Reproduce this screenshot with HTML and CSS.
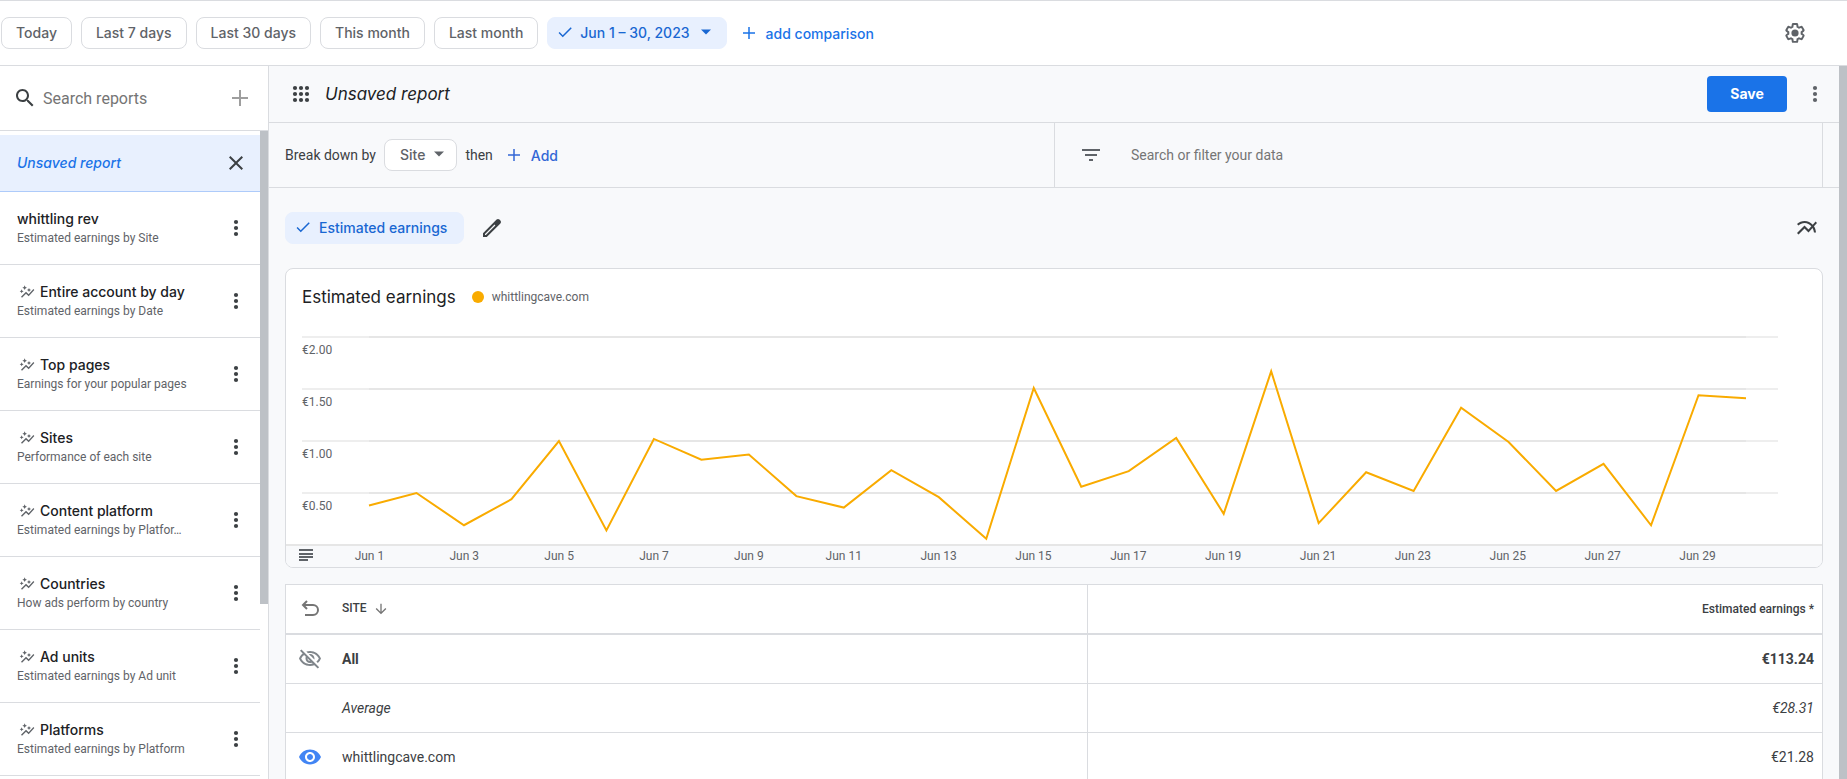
FILE: index.html
```html
<!DOCTYPE html>
<html lang="en">
<head>
    <meta charset="UTF-8">
    <meta name="viewport" content="width=device-width, initial-scale=1">
    <title>Reports</title>
    <link rel="stylesheet" href="styles.css">
</head>
<body>
    <!-- Shared icons -->
    <svg class="sprite" aria-hidden="true">
        <symbol id="i-more" viewBox="0 0 24 24"><circle cx="12" cy="6" r="2.1"/><circle cx="12" cy="12" r="2.1"/><circle cx="12" cy="18" r="2.1"/></symbol>
        <symbol id="i-plus" viewBox="0 0 24 24"><path d="M11 4h2v7h7v2h-7v7h-2v-7H4v-2h7z"/></symbol>
        <symbol id="i-check" viewBox="0 0 24 24"><path d="M9 16.17L4.83 12l-1.42 1.41L9 19 21 7l-1.41-1.41z"/></symbol>
        <symbol id="i-down" viewBox="0 0 24 24"><path d="M6 9l6 6 6-6z"/></symbol>
        <symbol id="i-insights" viewBox="0 0 24 24"><path d="M14.06 9.94L12 9l2.06-.94L15 6l.94 2.06L18 9l-2.06.94L15 12l-.94-2.06zM4 14l.94-2.06L7 11l-2.06-.94L4 8l-.94 2.06L1 11l2.06.94L4 14zm4.5-5l1.09-2.41L12 5.5 9.59 4.41 8.5 2 7.41 4.41 5 5.5l2.41 1.09L8.5 9zm-4 11.5l6-6.01 4 4L23 8.93l-1.41-1.41-7.09 7.97-4-4L3 19l1.5 1.5z"/></symbol>
    </svg>

    <header class="topbar">
        <button class="chip">Today</button>
        <button class="chip">Last 7 days</button>
        <button class="chip">Last 30 days</button>
        <button class="chip">This month</button>
        <button class="chip">Last month</button>
        <button class="chip chip-active date-chip">
            <svg class="icon-18"><use href="#i-check"/></svg>
            Jun 1 – 30, 2023
            <svg class="icon-20"><use href="#i-down"/></svg>
        </button>
        <button class="link-btn compare"><svg class="icon-18"><use href="#i-plus"/></svg>add comparison</button>
        <button class="icon-btn settings" aria-label="Settings">
            <svg class="icon-24" viewBox="0 0 24 24"><path fill="none" stroke="currentColor" stroke-width="2.2" transform="translate(1.3 1.3) scale(.89)" d="M19.43 12.98c.04-.32.07-.64.07-.98 0-.34-.03-.66-.07-.98l2.11-1.65c.19-.15.24-.42.12-.64l-2-3.46c-.09-.16-.26-.25-.44-.25-.06 0-.12.01-.17.03l-2.49 1c-.52-.4-1.08-.73-1.69-.98l-.38-2.65C14.46 2.18 14.25 2 14 2h-4c-.25 0-.46.18-.49.42l-.38 2.65c-.61.25-1.17.59-1.69.98l-2.49-1c-.06-.02-.12-.03-.18-.03-.17 0-.34.09-.43.25l-2 3.46c-.13.22-.07.49.12.64l2.11 1.65c-.04.32-.07.65-.07.98 0 .33.03.66.07.98l-2.11 1.65c-.19.15-.24.42-.12.64l2 3.46c.09.16.26.25.44.25.06 0 .12-.01.17-.03l2.49-1c.52.4 1.08.73 1.69.98l.38 2.65c.03.24.24.42.49.42h4c.25 0 .46-.18.49-.42l.38-2.65c.61-.25 1.17-.59 1.69-.98l2.49 1c.06.02.12.03.18.03.17 0 .34-.09.43-.25l2-3.46c.12-.22.07-.49-.12-.64z"/><circle cx="12" cy="12" r="3.6"/></svg>
        </button>
    </header>

    <div class="layout">
        <aside class="sidebar">
            <div class="search">
                <label for="search-reports" aria-label="Search reports"><svg class="icon-24" viewBox="0 0 24 24"><path d="M15.5 14h-.79l-.28-.27C15.41 12.59 16 11.11 16 9.5 16 5.91 13.09 3 9.5 3S3 5.91 3 9.5 5.91 16 9.5 16c1.61 0 3.09-.59 4.23-1.57l.27.28v.79l5 4.99L20.49 19l-4.99-5zm-6 0C7.01 14 5 11.99 5 9.5S7.01 5 9.5 5 14 7.01 14 9.5 11.99 14 9.5 14z"/></svg></label>
                <input type="text" id="search-reports" placeholder="Search reports">
                <button class="icon-btn new-report" aria-label="New report"><svg class="icon-24"><use href="#i-plus"/></svg></button>
            </div>
            <div class="list-wrap">
                <ul class="reports">
                    <li class="report selected">
                        <a href="#">Unsaved report</a>
                        <button class="icon-btn" aria-label="Close"><svg class="icon-24" viewBox="0 0 24 24"><path d="M19 6.41L17.59 5 12 10.59 6.41 5 5 6.41 10.59 12 5 17.59 6.41 19 12 13.41 17.59 19 19 17.59 13.41 12z"/></svg></button>
                    </li>
                    <li class="report">
                        <a href="#"><span class="name">whittling rev</span><span class="desc">Estimated earnings by Site</span></a>
                        <button class="icon-btn" aria-label="More"><svg class="icon-24"><use href="#i-more"/></svg></button>
                    </li>
                    <li class="report">
                        <a href="#"><span class="name"><svg class="icon-16"><use href="#i-insights"/></svg>Entire account by day</span><span class="desc">Estimated earnings by Date</span></a>
                        <button class="icon-btn" aria-label="More"><svg class="icon-24"><use href="#i-more"/></svg></button>
                    </li>
                    <li class="report">
                        <a href="#"><span class="name"><svg class="icon-16"><use href="#i-insights"/></svg>Top pages</span><span class="desc">Earnings for your popular pages</span></a>
                        <button class="icon-btn" aria-label="More"><svg class="icon-24"><use href="#i-more"/></svg></button>
                    </li>
                    <li class="report">
                        <a href="#"><span class="name"><svg class="icon-16"><use href="#i-insights"/></svg>Sites</span><span class="desc">Performance of each site</span></a>
                        <button class="icon-btn" aria-label="More"><svg class="icon-24"><use href="#i-more"/></svg></button>
                    </li>
                    <li class="report">
                        <a href="#"><span class="name"><svg class="icon-16"><use href="#i-insights"/></svg>Content platform</span><span class="desc">Estimated earnings by Platfor…</span></a>
                        <button class="icon-btn" aria-label="More"><svg class="icon-24"><use href="#i-more"/></svg></button>
                    </li>
                    <li class="report">
                        <a href="#"><span class="name"><svg class="icon-16"><use href="#i-insights"/></svg>Countries</span><span class="desc">How ads perform by country</span></a>
                        <button class="icon-btn" aria-label="More"><svg class="icon-24"><use href="#i-more"/></svg></button>
                    </li>
                    <li class="report">
                        <a href="#"><span class="name"><svg class="icon-16"><use href="#i-insights"/></svg>Ad units</span><span class="desc">Estimated earnings by Ad unit</span></a>
                        <button class="icon-btn" aria-label="More"><svg class="icon-24"><use href="#i-more"/></svg></button>
                    </li>
                    <li class="report">
                        <a href="#"><span class="name"><svg class="icon-16"><use href="#i-insights"/></svg>Platforms</span><span class="desc">Estimated earnings by Platform</span></a>
                        <button class="icon-btn" aria-label="More"><svg class="icon-24"><use href="#i-more"/></svg></button>
                    </li>
                </ul>
                <div class="scrollbar"><div class="thumb list-thumb"></div></div>
            </div>
        </aside>

        <main class="content">
            <div class="title-row">
                <svg class="icon-24" viewBox="0 0 24 24"><circle cx="6" cy="6" r="2.1"/><circle cx="12" cy="6" r="2.1"/><circle cx="18" cy="6" r="2.1"/><circle cx="6" cy="12" r="2.1"/><circle cx="12" cy="12" r="2.1"/><circle cx="18" cy="12" r="2.1"/><circle cx="6" cy="18" r="2.1"/><circle cx="12" cy="18" r="2.1"/><circle cx="18" cy="18" r="2.1"/></svg>
                <h1>Unsaved report</h1>
                <button class="save">Save</button>
                <button class="icon-btn" aria-label="More"><svg class="icon-24"><use href="#i-more"/></svg></button>
            </div>

            <div class="filter-row">
                <div class="breakdown">
                    <span>Break down by</span>
                    <button class="chip site-chip">Site <svg class="icon-20"><use href="#i-down"/></svg></button>
                    <span>then</span>
                    <button class="link-btn add"><svg class="icon-18"><use href="#i-plus"/></svg>Add</button>
                </div>
                <div class="filter">
                    <label for="filter-data" aria-label="Filter"><svg class="icon-24" viewBox="0 0 24 24"><path d="M10 18h4v-2h-4v2zM3 6v2h18V6H3zm3 7h12v-2H6v2z"/></svg></label>
                    <input type="text" id="filter-data" placeholder="Search or filter your data">
                </div>
            </div>

            <div class="metrics">
                <button class="chip chip-active"><svg class="icon-18"><use href="#i-check"/></svg>Estimated earnings</button>
                <button class="icon-btn" aria-label="Edit metrics"><svg class="icon-24" viewBox="0 0 24 24"><path fill-rule="evenodd" d="M3 17.2V21h3.8L20.4 7.4a2 2 0 0 0 0-2.8l-1-1a2 2 0 0 0-2.800 0zM5 18.100L14.500 8.600l.9.900L5.900 19H5z"/></svg></button>
                <button class="icon-btn chart-toggle" aria-label="Chart type"><svg class="icon-24" viewBox="0 0 24 24"><path d="M22 6.92l-1.41-1.41-2.85 3.21C15.68 6.4 12.83 5 9.61 5 6.72 5 4.07 6.16 2 8l1.42 1.42C5.12 7.93 7.27 7 9.61 7c2.74 0 5.09 1.26 6.77 3.24l-2.88 3.24-4-4L2 16.99l1.5 1.5 6-6.01 4 4 4.05-4.55c.75 1.35 1.25 2.9 1.44 4.55H21c-.22-2.3-.95-4.39-2.04-6.14L22 6.92z"/></svg></button>
            </div>

            <section class="card">
                <div class="card-head">
                    <h2>Estimated earnings</h2>
                    <span class="dot"></span>
                    <span class="legend">whittlingcave.com</span>
                </div>
                <div class="chart">
                    <div class="gridlines">
                        <div>€2.00</div>
                        <div>€1.50</div>
                        <div>€1.00</div>
                        <div>€0.50</div>
                    </div>
                    <!-- one unit per day across, 100 units per euro down -->
                    <svg class="line" viewBox="0 0 29 200" preserveAspectRatio="none">
                        <polyline points="0,162 1,150 2,181 3,156 4,100 5,186 6,98 7,118 8,113 9,153 10,164 11,128 12,154 13,194 14,49 15,144 16,129 17,97 18,170 19,33 20,179 21,130 22,148 23,68 24,101 25,148 26,122 27,181 28,56 29,59"/>
                    </svg>
                </div>
                <div class="axis">
                    <svg class="icon-24" viewBox="0 0 24 24"><path d="M5 5h14v2H5zM5 9h14v2H5zM5 12h14v2H5zM5 15h9v2H5z"/></svg>
                    <ol class="days">
                        <li>Jun 1</li><li>Jun 3</li><li>Jun 5</li><li>Jun 7</li><li>Jun 9</li>
                        <li>Jun 11</li><li>Jun 13</li><li>Jun 15</li><li>Jun 17</li><li>Jun 19</li>
                        <li>Jun 21</li><li>Jun 23</li><li>Jun 25</li><li>Jun 27</li><li>Jun 29</li>
                    </ol>
                </div>
            </section>

            <table>
                <colgroup><col class="col-icon"><col class="col-site"><col></colgroup>
                <thead>
                    <tr>
                        <th><svg class="icon-24 undo" viewBox="0 0 24 24"><path fill="none" stroke="currentColor" stroke-width="2" d="M9 4L5 8l4 4M5 8h10a5 5 0 0 1 0 10H7"/></svg></th>
                        <th class="site-head">SITE <svg class="icon-16" viewBox="0 0 24 24"><path d="M20 12l-1.410-1.410L13 16.170V4h-2v12.170l-5.580-5.590L4 12l8 8z"/></svg></th>
                        <th class="num">Estimated earnings *</th>
                    </tr>
                </thead>
                <tbody>
                    <tr class="total">
                        <td><svg class="icon-24 eye-off" viewBox="0 0 24 24"><path d="M12 6c3.79 0 7.17 2.13 8.82 5.5-.59 1.22-1.42 2.27-2.41 3.12l1.41 1.41c1.39-1.23 2.49-2.77 3.18-4.53C21.27 7.11 17 4 12 4c-1.27 0-2.49.2-3.64.57l1.65 1.65C10.66 6.09 11.32 6 12 6zm-1.07 1.14L13 9.21c.57.25 1.03.71 1.28 1.28l2.07 2.07c.08-.34.14-.7.14-1.07C16.5 9.01 14.48 7 12 7c-.37 0-.72.05-1.07.14zM2.01 3.87l2.68 2.68C3.06 7.83 1.77 9.53 1 11.5 2.73 15.89 7 19 12 19c1.52 0 2.98-.29 4.32-.82l3.42 3.42 1.41-1.41L3.42 2.45 2.01 3.87zm7.5 7.5l2.61 2.61c-.04.01-.08.02-.12.02-1.38 0-2.5-1.12-2.5-2.5 0-.05.01-.08.01-.13zm-3.4-3.4l1.75 1.75c-.23.55-.36 1.15-.36 1.78 0 2.48 2.02 4.5 4.5 4.5.63 0 1.23-.13 1.77-.36l.98.98c-.88.24-1.8.38-2.75.38-3.79 0-7.17-2.13-8.82-5.5.7-1.43 1.72-2.61 2.93-3.53z"/></svg></td>
                        <td>All</td>
                        <td class="num">€113.24</td>
                    </tr>
                    <tr class="average">
                        <td></td>
                        <td>Average</td>
                        <td class="num">€28.31</td>
                    </tr>
                    <tr>
                        <td><svg class="icon-24 eye" viewBox="0 0 24 24"><path d="M12 4.500C7 4.500 2.730 7.610 1 12c1.730 4.390 6 7.500 11 7.500s9.270-3.110 11-7.500c-1.730-4.390-6-7.500-11-7.500zM12 17c-2.760 0-5-2.240-5-5s2.240-5 5-5 5 2.240 5 5-2.240 5-5 5zm0-8c-1.660 0-3 1.340-3 3s1.340 3 3 3 3-1.340 3-3-1.340-3-3-3z"/></svg></td>
                        <td>whittlingcave.com</td>
                        <td class="num">€21.28</td>
                    </tr>
                </tbody>
            </table>
        </main>
        <div class="scrollbar"><div class="thumb"></div></div>
    </div>
</body>
</html>
```
FILE: styles.css
```css
* {
    box-sizing: border-box;
}

body {
    margin: 0;
    height: 100vh;
    display: flex;
    flex-direction: column;
    overflow: hidden;
    background-color: #fff;
    color: #3c4043;
    font-family: Roboto, sans-serif;
    font-size: 14px;
}

/* Icons */
svg {
    display: block;
    flex: none;
    fill: currentColor;
}

.sprite {
    position: absolute;
    width: 0;
    height: 0;
}

.icon-16 { width: 16px; height: 16px; }
.icon-18 { width: 18px; height: 18px; }
.icon-20 { width: 20px; height: 20px; }
.icon-24 { width: 24px; height: 24px; }

/* Buttons and inputs */
button {
    padding: 0;
    border: none;
    background: none;
    color: inherit;
    font-family: Inter, sans-serif;
    font-size: 14px;
    font-weight: 500;
    white-space: nowrap;
    cursor: pointer;
}

input {
    min-width: 0;
    flex: 1;
    padding: 0;
    border: none;
    outline: none;
    background: none;
    color: #3c4043;
    font-family: Roboto, sans-serif;
    font-size: 14px;
}

input::placeholder {
    color: #757575;
}

.chip {
    display: flex;
    align-items: center;
    height: 32px;
    padding: 0 14px 2px;
    border: 1px solid #dadce0;
    border-radius: 8px;
    background-color: #fff;
    color: #5f6368;
}

.chip-active {
    gap: 7px;
    padding: 0 16px 2px 8px;
    border-color: #e8f0fe;
    background-color: #e8f0fe;
    color: #1967d2;
}

.date-chip {
    gap: 6px;
    padding-right: 10px;
}

.link-btn {
    display: flex;
    align-items: center;
    gap: 8px;
    color: #1a73e8;
}

/* Top bar */
.topbar {
    display: flex;
    align-items: center;
    gap: 9px;
    height: 66px;
    padding: 0 40px 0 1px;
    border-top: 1px solid #dadce0;
    border-bottom: 1px solid #dadce0;
}

.compare {
    margin-left: 4px;
}

.settings {
    margin-left: auto;
    color: #5f6368;
}

.layout {
    flex: 1;
    min-height: 0;
    display: flex;
}

.scrollbar {
    flex: none;
    width: 8px;
}

.thumb {
    height: 100%;
    background-color: #bdc1c6;
}

.list-thumb {
    height: 73%;
}

/* Sidebar */
.sidebar {
    flex: none;
    display: flex;
    flex-direction: column;
    width: 269px;
    border-right: 1px solid #dadce0;
}

.search {
    display: flex;
    align-items: center;
    gap: 6px;
    height: 65px;
    padding: 0 16px 0 13px;
    border-bottom: 1px solid #dadce0;
}

.search input {
    font-size: 16px;
}

.new-report {
    color: #9e9e9e;
}

.list-wrap {
    flex: 1;
    min-height: 0;
    display: flex;
}

.reports {
    flex: 1;
    min-width: 0;
    margin: 0;
    padding: 4px 0 0;
    overflow: hidden;
    list-style: none;
}

.report {
    display: flex;
    align-items: center;
    height: 73px;
    padding: 0 12px 0 17px;
    border-bottom: 1px solid #dadce0;
}

.report a {
    flex: 1;
    min-width: 0;
    color: inherit;
    text-decoration: none;
}

.report.selected {
    height: 57px;
    border-bottom-color: #aecbfa;
    background-color: #e8f0fe;
}

.report.selected a {
    padding-bottom: 2px;
    color: #1a73e8;
    font-family: Inter, sans-serif;
    font-style: italic;
    font-weight: 500;
}

.name {
    display: flex;
    align-items: center;
    gap: 5px;
    margin-bottom: 2px;
    color: #202124;
    font-family: Inter, sans-serif;
    font-weight: 500;
    line-height: 18px;
}

.name svg {
    margin-left: 2px;
    color: #5f6368;
}

.desc {
    display: block;
    color: #5f6368;
    font-size: 12px;
    line-height: 16px;
    white-space: nowrap;
}

/* Main area */
.content {
    flex: 1;
    min-width: 0;
    overflow: hidden;
    background-color: #f8f9fb;
}

.title-row {
    display: flex;
    align-items: center;
    gap: 12px;
    height: 57px;
    padding: 0 12px 0 20px;
    border-bottom: 1px solid #dadce0;
}

h1,
h2 {
    margin: 0;
    color: #202124;
    font-family: Inter, sans-serif;
    font-size: 17px;
    font-weight: 400;
}

h1 {
    flex: 1;
    font-style: italic;
}

.save {
    width: 80px;
    height: 36px;
    padding-bottom: 2px;
    border-radius: 4px;
    background-color: #1a73e8;
    color: #fff;
    font-weight: 700;
}

.title-row .icon-btn {
    margin-left: 4px;
    color: #5f6368;
}

.filter-row {
    display: grid;
    grid-template-columns: 1fr 1fr;
    height: 65px;
    padding: 0 16px;
    border-bottom: 1px solid #dadce0;
}

.breakdown {
    display: flex;
    align-items: center;
    gap: 8px;
}

.site-chip {
    gap: 4px;
    padding: 0 7px 2px 15px;
}

.add {
    margin-left: 4px;
    color: #3367d6;
}

.filter {
    display: flex;
    align-items: center;
    gap: 28px;
    padding: 0 24px;
    border-left: 1px solid #dadce0;
    border-right: 1px solid #dadce0;
}

.filter svg {
    color: #5f6368;
}

.metrics {
    display: flex;
    align-items: center;
    gap: 16px;
    height: 80px;
    padding: 0 20px 0 16px;
}

.chart-toggle {
    margin-left: auto;
}

/* Chart card */
.card {
    margin: 0 16px 16px;
    overflow: hidden;
    border: 1px solid #dadce0;
    border-radius: 8px;
    background-color: #fff;
}

.card-head {
    display: flex;
    align-items: center;
    height: 56px;
    padding: 0 16px;
}

.dot {
    width: 12px;
    height: 12px;
    margin: 0 8px 0 16px;
    border-radius: 50%;
    background-color: #f9ab00;
}

.legend {
    color: #5f6368;
    font-size: 12px;
}

.chart {
    display: grid;
    height: 219px;
    padding: 11px 44px 0 16px;
}

.gridlines,
.line {
    grid-area: 1 / 1;
}

.gridlines div {
    height: 52px;
    padding-top: 6px;
    background: linear-gradient(to right, #eee 67px, #e6e6e6 67px calc(100% - 32px), #eee 0) top / 100% 2px no-repeat;
    color: #5f6368;
    font-size: 12px;
    line-height: 16px;
}

.line {
    width: calc(100% - 99px);
    height: 208px;
    margin: 1px 0 0 67px;
    overflow: visible;
}

.line polyline {
    fill: none;
    stroke: #f9ab00;
    stroke-width: 2;
    vector-effect: non-scaling-stroke;
}

.axis {
    display: flex;
    align-items: center;
    height: 23px;
    padding: 0 77px 2px 8px;
    border-top: 2px solid #e6e6e6;
    background-color: #f8f9fb;
}

.axis svg {
    color: #5f6368;
}

.days {
    flex: 1;
    display: flex;
    margin: 0 0 0 4px;
    padding: 0;
    list-style: none;
    color: #5f6368;
    font-size: 12px;
    text-align: center;
}

.days li {
    flex: 1;
}

/* Table */
table {
    width: calc(100% - 32px);
    margin: 0 16px;
    table-layout: fixed;
    border-collapse: separate;
    border-spacing: 0;
    border: 1px solid #dadce0;
    background-color: #fff;
}

.col-icon { width: 56px; }
.col-site { width: 48.5%; }

th,
td {
    height: 49px;
    padding: 0 0 1px;
    border-bottom: 1px solid #dadce0;
    text-align: left;
}

th {
    height: 50px;
    border-bottom-width: 2px;
    font-size: 12px;
    font-weight: 500;
}

th:first-child,
td:first-child {
    padding-left: 12px;
}

.site-head svg {
    display: inline-block;
    margin-left: 3px;
    vertical-align: middle;
    color: #757575;
}

.num {
    padding-right: 8px;
    border-left: 1px solid #dadce0;
    text-align: right;
}

.total {
    font-weight: 700;
}

.average {
    font-style: italic;
}

.undo { color: #757575; }
.eye-off { color: #80868b; }
.eye { color: #4285f4; }
```
